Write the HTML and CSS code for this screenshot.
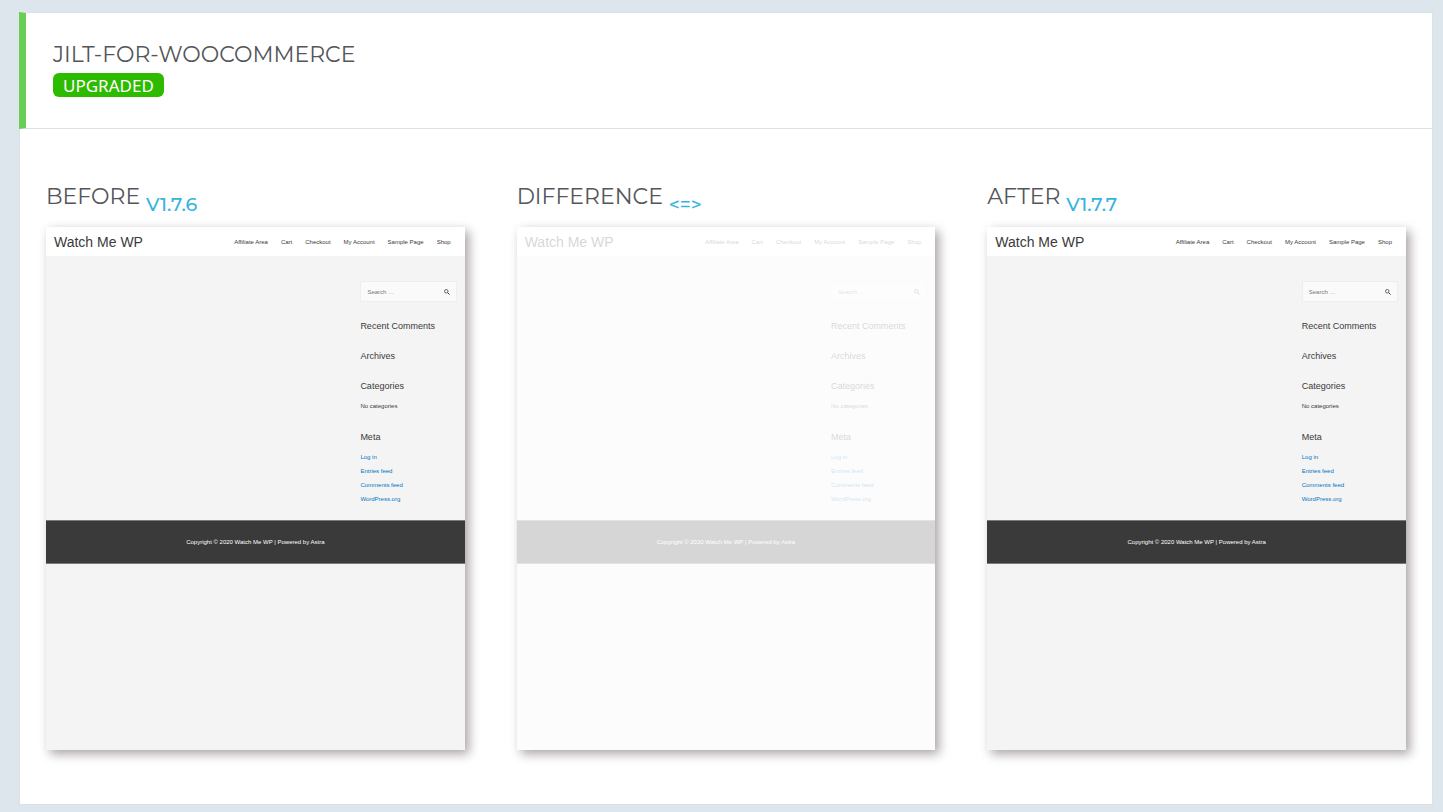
FILE: index.html
```
<!DOCTYPE html>
<html lang="en">
<head>
<meta charset="utf-8">
<meta name="viewport" content="width=device-width, initial-scale=1">
<title>jilt-for-woocommerce</title>
<link rel="stylesheet" href="styles.css">
</head>
<body>
<main class="panel">
  <header class="panel-head">
    <h1 class="title">JILT-FOR-WOOCOMMERCE</h1>
    <span class="badge">UPGRADED</span>
  </header>
  <div class="columns">
    <section class="column">
      <h2 class="title">BEFORE <sub class="version">V1.7.6</sub></h2>
      <article class="shot"></article>
    </section>
    <section class="column">
      <h2 class="title">DIFFERENCE <sub class="version">&lt;=&gt;</sub></h2>
      <article class="shot shot-faded"></article>
    </section>
    <section class="column">
      <h2 class="title">AFTER <sub class="version">V1.7.7</sub></h2>
      <article class="shot"></article>
    </section>
  </div>
</main>
<template id="site">
  <div class="site">
    <div class="site-head">
      <span class="site-name">Watch Me WP</span>
      <nav class="site-nav">
        <a href="#">Affiliate Area</a>
        <a href="#">Cart</a>
        <a href="#">Checkout</a>
        <a href="#">My Account</a>
        <a href="#">Sample Page</a>
        <a href="#">Shop</a>
      </nav>
    </div>
    <aside class="sidebar">
      <form class="search">
        <input type="search" placeholder="Search …" aria-label="Search">
        <button type="button" aria-label="Submit search">
          <svg viewBox="0 0 12 12" width="6" height="6" fill="none" stroke="currentColor"><circle cx="4.5" cy="4.5" r="3.5" stroke-width="1.5"/><path d="M7.2 7.2 11.2 11.2" stroke-width="2"/></svg>
        </button>
      </form>
      <section><h3>Recent Comments</h3></section>
      <section><h3>Archives</h3></section>
      <section><h3>Categories</h3><ul><li>No categories</li></ul></section>
      <section><h3>Meta</h3>
        <ul>
          <li><a href="#">Log in</a></li>
          <li><a href="#">Entries feed</a></li>
          <li><a href="#">Comments feed</a></li>
          <li><a href="#">WordPress.org</a></li>
        </ul>
      </section>
    </aside>
    <footer class="site-foot">Copyright © 2020 Watch Me WP | Powered by Astra</footer>
  </div>
</template>
<script src="script.js"></script>
</body>
</html>
```
FILE: script.js
```
const site = document.getElementById('site');
document.querySelectorAll('.shot').forEach((shot) => {
  shot.appendChild(site.content.cloneNode(true));
});
```
FILE: styles.css
```
* { box-sizing: border-box; }

body {
  margin: 0;
  padding: 12px 10px 7px 19px;
  background: #dee6ed;
  color: #55565a;
  font-family: Montserrat, Inter, sans-serif;
}

.panel {
  background: #fff;
  border: 1px solid #dbe2e6;
}

.panel-head {
  margin: -1px 0 0 -1px;
  padding: 28px 27px 31px;
  border: 1px solid #dbe2e6;
  border-left: 7px solid #68ce54;
  border-right: 0;
}

.title {
  margin: 0;
  font-size: 22px;
  font-weight: 400;
  line-height: 28px;
}

.badge {
  display: block;
  width: fit-content;
  margin-top: 4px;
  padding: 1px 10px 0;
  border-radius: 6px;
  background: #2dbb00;
  color: #fff;
  font-family: "Noto Sans", sans-serif;
  font-size: 17px;
  line-height: 23px;
}

.columns {
  display: grid;
  grid-template-columns: repeat(3, 1fr);
  gap: 52px;
  padding: 54px 26px 54px;
}

.column .title {
  margin-bottom: 16px;
}

.version {
  color: #35b4dd;
  font-size: 19px;
  font-weight: 500;
  line-height: 0;
  vertical-align: -7px;
}

.shot {
  aspect-ratio: 4 / 5;
  background: #fff;
  box-shadow: 4px 4px 10px #aaa3a8;
  color: #3a3a3a;
  font-family: "Liberation Sans", Arial, sans-serif;
  font-size: 6px;
}

.site {
  height: 100%;
  background: #f4f4f4;
}

.shot-faded .site { opacity: 0.2; }

.site a {
  color: inherit;
  text-decoration: none;
}

.site-head {
  display: flex;
  align-items: center;
  justify-content: space-between;
  height: 29px;
  padding: 0 14px 0 8px;
  background: #fff;
}

.site-name { font-size: 14px; }

.site-nav {
  display: flex;
  gap: 13px;
}

.sidebar {
  display: flex;
  flex-direction: column;
  gap: 18px;
  width: 23%;
  margin: 0 8px 0 auto;
  padding: 25px 0 14px;
}

.search {
  display: flex;
  align-items: center;
  height: 21px;
  padding: 0 6px;
  border: 1px solid #eee;
  background: #fafafa;
}

.search input {
  flex: 1;
  min-width: 0;
  padding: 0;
  border: 0;
  outline: 0;
  background: none;
  font: inherit;
}

.search input::placeholder { color: #777; }

.search button {
  display: flex;
  padding: 0;
  border: 0;
  background: none;
  color: #3a3a3a;
}

.sidebar h3 {
  margin: 0;
  font-size: 9px;
  font-weight: 400;
  line-height: 12px;
}

.sidebar ul {
  margin: 7px 0 0;
  padding: 0;
  list-style: none;
  line-height: 14px;
}

.sidebar li a { color: #0274be; }

.site-foot {
  border: 1px solid #7a7a7a;
  border-width: 1px 0;
  background: #3a3a3a;
  color: #fff;
  line-height: 42px;
  text-align: center;
}
```
